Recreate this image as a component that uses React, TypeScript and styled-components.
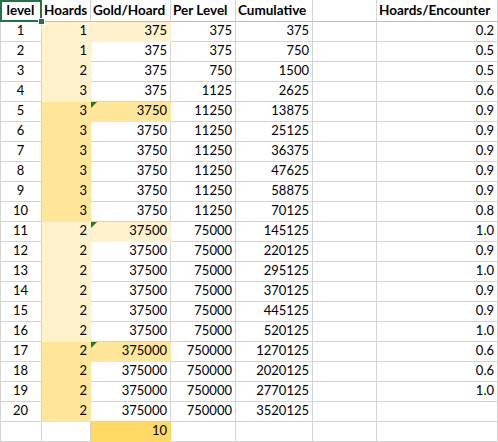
import React from "react";
import styled, { createGlobalStyle, css } from "styled-components";

const GRID = "#d4d4d4";
const LIGHT = "#fff2cc";
const DARK = "#ffe699";
const GOLD = "#ffd966";

const Global = createGlobalStyle`
  html, body { margin: 0; padding: 0; background: #fff; }
  body { font-family: Lato, "Open Sans", sans-serif; color: #000; }
`;

const Sheet = styled.div`
  position: relative;
  display: grid;
  grid-template-columns: 42px 49px 80px 65px 77px 64px 121px;
  grid-template-rows: 22px;
  grid-auto-rows: 20px;
  width: 498px;
  background: #fff;
`;

type Align = "left" | "center" | "right";

const Cell = styled.div<{
  $align?: Align;
  $fill?: string;
  $head?: boolean;
  $first?: boolean;
}>`
  position: relative;
  box-sizing: border-box;
  display: flex;
  align-items: flex-end;
  justify-content: ${(p) =>
    p.$align === "center" ? "center" : p.$align === "left" ? "flex-start" : "flex-end"};
  padding: 0 3px 3px 2px;
  font-size: 13px;
  line-height: 15px;
  white-space: nowrap;
  overflow: visible;
  background: ${(p) => p.$fill || "#fff"};
  border-right: 1px solid ${(p) => p.$fill || GRID};
  border-bottom: 1px solid ${(p) => (p.$head ? "#bdbdbd" : p.$fill || GRID)};
  ${(p) =>
    p.$first &&
    css`
      border-left: 1px solid ${GRID};
    `}
  ${(p) =>
    p.$head &&
    css`
      font-weight: 700;
      font-size: 13.5px;
      padding-bottom: 3px;
    `}
`;

const Flag = styled.span`
  position: absolute;
  left: 0;
  top: 0;
  width: 0;
  height: 0;
  border-top: 6px solid #1b7d1b;
  border-right: 6px solid transparent;
`;

const Selection = styled.div`
  position: absolute;
  left: 0;
  top: 0;
  width: 42px;
  height: 22px;
  box-sizing: border-box;
  border: 2px solid #217346;
  pointer-events: none;
`;

const Handle = styled.span`
  position: absolute;
  right: -4px;
  bottom: -4px;
  width: 5px;
  height: 5px;
  background: #217346;
  border: 1px solid #fff;
  box-sizing: content-box;
  margin: -1px;
`;

type Row = {
  lvl: string;
  hoards: string;
  gold: string;
  per: string;
  cum: string;
  enc: string;
  hFill?: string;
  gFill?: string;
  flag?: boolean;
};

const raw: [number, number, number, number, number, string][] = [
  [1, 1, 375, 375, 375, "0.2"],
  [2, 1, 375, 375, 750, "0.5"],
  [3, 2, 375, 750, 1500, "0.5"],
  [4, 3, 375, 1125, 2625, "0.6"],
  [5, 3, 3750, 11250, 13875, "0.9"],
  [6, 3, 3750, 11250, 25125, "0.9"],
  [7, 3, 3750, 11250, 36375, "0.9"],
  [8, 3, 3750, 11250, 47625, "0.9"],
  [9, 3, 3750, 11250, 58875, "0.9"],
  [10, 3, 3750, 11250, 70125, "0.8"],
  [11, 2, 37500, 75000, 145125, "1.0"],
  [12, 2, 37500, 75000, 220125, "0.9"],
  [13, 2, 37500, 75000, 295125, "1.0"],
  [14, 2, 37500, 75000, 370125, "0.9"],
  [15, 2, 37500, 75000, 445125, "0.9"],
  [16, 2, 37500, 75000, 520125, "1.0"],
  [17, 2, 375000, 750000, 1270125, "0.6"],
  [18, 2, 375000, 750000, 2020125, "0.6"],
  [19, 2, 375000, 750000, 2770125, "1.0"],
  [20, 2, 375000, 750000, 3520125, ""],
];

const rows: Row[] = raw.map(([l, h, g, p, c, e]) => {
  const dark = (l >= 5 && l <= 10) || l >= 17;
  const hFill = dark ? DARK : LIGHT;
  const start = l === 1 || l === 5 || l === 11 || l === 17;
  return {
    lvl: String(l),
    hoards: String(h),
    gold: String(g),
    per: String(p),
    cum: String(c),
    enc: e,
    hFill,
    gFill: start ? hFill : undefined,
    flag: start && l !== 1,
  };
});

rows.push({ lvl: "", hoards: "", gold: "10", per: "", cum: "", enc: "", gFill: GOLD });

export default function App() {
  return (
    <>
      <Global />
      <Sheet>
        <Cell $head $first $align="center">level</Cell>
        <Cell $head $align="left">Hoards</Cell>
        <Cell $head $align="left">Gold/Hoard</Cell>
        <Cell $head $align="left">Per Level</Cell>
        <Cell $head $align="left">Cumulative</Cell>
        <Cell $head $align="left"></Cell>
        <Cell $head $align="left">Hoards/Encounter</Cell>
        {rows.map((r, i) => (
          <React.Fragment key={i}>
            <Cell $first $align="center">{r.lvl}</Cell>
            <Cell $fill={r.hFill}>{r.hoards}</Cell>
            <Cell $fill={r.gFill}>
              {r.flag && <Flag />}
              {r.gold}
            </Cell>
            <Cell>{r.per}</Cell>
            <Cell>{r.cum}</Cell>
            <Cell></Cell>
            <Cell>{r.enc}</Cell>
          </React.Fragment>
        ))}
        <Selection>
          <Handle />
        </Selection>
      </Sheet>
    </>
  );
}
